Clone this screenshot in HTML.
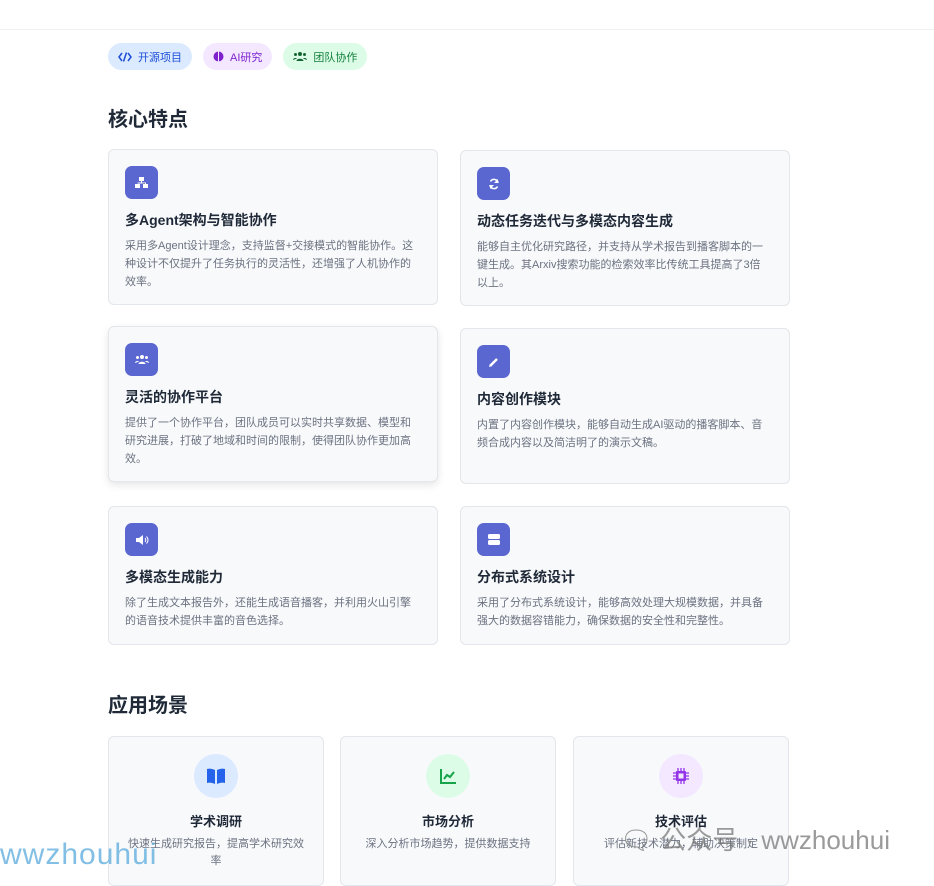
<!DOCTYPE html>
<html><head><meta charset="utf-8"><style>
*{box-sizing:border-box;margin:0;padding:0}
body{width:934px;height:875px;overflow:hidden;background:#fff;font-family:"Liberation Sans","Noto Sans CJK SC",sans-serif;color:#1f2937;position:relative}
.top{position:absolute;left:0;top:0;width:934px;height:30px;border-bottom:1px solid #eef0f3}
.tags{position:absolute;left:108px;top:43px;display:flex;gap:11px}
.tag{height:27px;border-radius:14px;padding:0 10px;font-size:11px;display:flex;align-items:center;gap:6px}
h2{position:absolute;left:108px;font-size:20px;font-weight:700;color:#1f2937}
.card{position:absolute;width:330px;background:#f8f9fb;border:1px solid #e3e6ea;border-radius:6px;padding:16px 18px 16px 16px}
.ic{width:33px;height:33px;border-radius:7px;background:#5b67d1;display:flex;align-items:center;justify-content:center}
.card h3{font-size:14px;font-weight:700;margin-top:11px;color:#1f2937}
.card p{font-size:11px;line-height:18px;color:#6b7280;margin-top:7px}
.sc{position:absolute;top:736px;width:216px;height:150px;background:#f8f9fb;border:1px solid #e3e6ea;border-radius:6px;text-align:center}
.circ{width:44px;height:44px;border-radius:50%;margin:17px auto 0;display:flex;align-items:center;justify-content:center}
.sc h4{font-size:13px;font-weight:700;margin-top:13px;color:#1f2937}
.sc p{font-size:11px;line-height:17px;color:#6b7280;margin:6px 14px 0}
</style></head><body>
<div class="top"></div>
<div class="tags">
<div class="tag" style="background:#dbeafe;color:#1d4ed8"><svg width="14" height="10" viewBox="0 0 14 10"><path d="M4 1L1 5l3 4M10 1l3 4-3 4M8.5 0.5L5.5 9.5" stroke="#1d4ed8" stroke-width="1.5" fill="none"/></svg>开源项目</div>
<div class="tag" style="background:#f3e8ff;color:#7e22ce"><svg width="11" height="11"><ellipse cx="5.5" cy="5.5" rx="5" ry="5" fill="#7e22ce"/><rect x="5" y="0" width="1" height="11" fill="#f3e8ff"/></svg>AI研究</div>
<div class="tag" style="background:#dcfce7;color:#15803d"><svg width="14" height="11" viewBox="0 0 14 11"><circle cx="7" cy="3" r="2" fill="#166534"/><circle cx="2.5" cy="3.5" r="1.5" fill="#166534"/><circle cx="11.5" cy="3.5" r="1.5" fill="#166534"/><path d="M3.5 10c0-3 7-3 7 0zM0 9c0-2 3-2.5 4-1.5M14 9c0-2-3-2.5-4-1.5" fill="#166534"/></svg>团队协作</div>
</div>
<h2 style="top:103px">核心特点</h2>

<div class="card" style="left:108px;top:149px;height:156px"><div class="ic"><svg width="13" height="12"><rect x="4" y="0" width="5" height="4" fill="#fff"/><rect x="0" y="7" width="5" height="4" fill="#fff"/><rect x="8" y="7" width="5" height="4" fill="#fff"/><path d="M6.5 4v2M2.5 6h8v1" stroke="#fff"/></svg></div><h3>多Agent架构与智能协作</h3><p>采用多Agent设计理念，支持监督+交接模式的智能协作。这种设计不仅提升了任务执行的灵活性，还增强了人机协作的效率。</p></div>
<div class="card" style="left:460px;top:150px;height:156px"><div class="ic"><svg width="12" height="12" viewBox="0 0 12 12"><path d="M10 5A4 4 0 0 0 2.5 3.5M2 7a4 4 0 0 0 7.5 1.5" stroke="#fff" stroke-width="1.6" fill="none"/><path d="M10 1v4H6zM2 11V7h4z" fill="#fff"/></svg></div><h3>动态任务迭代与多模态内容生成</h3><p>能够自主优化研究路径，并支持从学术报告到播客脚本的一键生成。其Arxiv搜索功能的检索效率比传统工具提高了3倍以上。</p></div>
<div class="card" style="left:108px;top:326px;height:156px;box-shadow:0 3px 8px rgba(0,0,0,.1)"><div class="ic"><svg width="14" height="11" viewBox="0 0 14 11"><circle cx="7" cy="3" r="2" fill="#fff"/><circle cx="2.5" cy="3.5" r="1.5" fill="#fff"/><circle cx="11.5" cy="3.5" r="1.5" fill="#fff"/><path d="M3.5 10c0-3 7-3 7 0zM0 9c0-2 3-2.5 4-1.5M14 9c0-2-3-2.5-4-1.5" fill="#fff"/></svg></div><h3>灵活的协作平台</h3><p>提供了一个协作平台，团队成员可以实时共享数据、模型和研究进展，打破了地域和时间的限制，使得团队协作更加高效。</p></div>
<div class="card" style="left:460px;top:328px;height:156px"><div class="ic"><svg width="12" height="12"><path d="M2 10L9 3" stroke="#fff" stroke-width="2.5"/><path d="M1 11l1-3 2 2z" fill="#fff"/></svg></div><h3>内容创作模块</h3><p>内置了内容创作模块，能够自动生成AI驱动的播客脚本、音频合成内容以及简洁明了的演示文稿。</p></div>
<div class="card" style="left:108px;top:506px;height:139px"><div class="ic"><svg width="14" height="12"><path d="M1 4h3l4-3v10L4 8H1z" fill="#fff"/><path d="M10 4q1.5 2 0 4M11.5 2.5q3 3.5 0 7" stroke="#fff" fill="none"/></svg></div><h3>多模态生成能力</h3><p>除了生成文本报告外，还能生成语音播客，并利用火山引擎的语音技术提供丰富的音色选择。</p></div>
<div class="card" style="left:460px;top:506px;height:139px"><div class="ic"><svg width="12" height="11"><rect x="0" y="0" width="12" height="5" rx="1.5" fill="#fff"/><rect x="0" y="6" width="12" height="5" rx="1.5" fill="#fff"/></svg></div><h3>分布式系统设计</h3><p>采用了分布式系统设计，能够高效处理大规模数据，并具备强大的数据容错能力，确保数据的安全性和完整性。</p></div>

<h2 style="top:689px">应用场景</h2>
<div class="sc" style="left:108px"><div class="circ" style="background:#dbeafe"><svg width="20" height="16"><path d="M1 1q4-1 8 1v14q-4-2-8-1zM19 1q-4-1-8 1v14q4-2 8-1z" fill="#2563eb"/></svg></div><h4>学术调研</h4><p>快速生成研究报告，提高学术研究效率</p></div>
<div class="sc" style="left:340px"><div class="circ" style="background:#dcfce7"><svg width="16" height="15"><path d="M1 0v14h15" stroke="#16a34a" stroke-width="2" fill="none"/><path d="M4 10l3-4 3 2 4-5" stroke="#16a34a" stroke-width="2" fill="none"/></svg></div><h4>市场分析</h4><p>深入分析市场趋势，提供数据支持</p></div>
<div class="sc" style="left:573px"><div class="circ" style="background:#f3e8ff"><svg width="16" height="16"><rect x="3" y="3" width="10" height="10" rx="1" fill="#9333ea"/><rect x="5.5" y="5.5" width="5" height="5" fill="#f3e8ff"/><path d="M5 0v3M8 0v3M11 0v3M5 13v3M8 13v3M11 13v3M0 5h3M0 8h3M0 11h3M13 5h3M13 8h3M13 11h3" stroke="#9333ea" stroke-width="1.3"/></svg></div><h4>技术评估</h4><p>评估新技术潜力，辅助决策制定</p></div>

<div style="position:absolute;left:620px;top:820px;font-size:26px;color:rgba(120,120,120,.75)">🗨 公众号 · wwzhouhui</div>
<div style="position:absolute;left:0;top:838px;font-size:30px;color:rgba(90,170,220,.75);letter-spacing:1px">wwzhouhui</div>
</body></html>
